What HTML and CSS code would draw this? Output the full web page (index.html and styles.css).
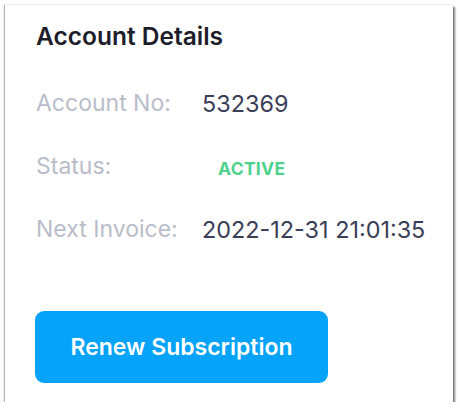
FILE: index.html
```html
<!DOCTYPE html>
<html>
<head>
<meta charset="utf-8">
<link rel="stylesheet" href="styles.css">
</head>
<body>
<div class="card">
  <h2 class="title">Account Details</h2>
  <div class="rows">
    <div class="row"><span class="label">Account No:</span><span class="value">532369</span></div>
    <div class="row"><span class="label">Status:</span><span class="value"><span class="badge">ACTIVE</span></span></div>
    <div class="row"><span class="label">Next Invoice:</span><span class="value">2022-12-31 21:01:35</span></div>
  </div>
  <button class="btn">Renew Subscription</button>
</div>
</body>
</html>
```
FILE: styles.css
```css
html, body {
  margin: 0;
  background: #fff;
}
body {
  padding: 5px 0 0 4px;
  font-family: Inter, "Noto Sans", sans-serif;
}
.card {
  width: 449px;
  height: 397px;
  box-sizing: border-box;
  background: #fff;
  padding: 16px 0 0 31px;
  box-shadow: 0 0 2px rgba(0,0,0,0.2), 2px 2px 2px rgba(0,0,0,0.5);
  border-left: 1px solid #b5b5b5;
}
.title {
  margin: 0;
  font-size: 24.5px;
  font-weight: 600;
  color: #1e1d2b;
  line-height: 30px;
}
.rows {
  margin-top: 37px;
  display: flex;
  flex-direction: column;
  gap: 33px;
}
.row {
  display: flex;
  align-items: center;
  height: 30px;
  font-size: 23px;
}
.label {
  width: 166px;
  color: #b9bdc9;
}
.value {
  color: #3b3e57;
  font-size: 23.4px;
}
.badge {
  display: inline-block;
  padding: 0 16px;
  font-size: 17.5px;
  font-weight: 700;
  color: #4fd18e;
  letter-spacing: 0.3px;
}
.btn {
  margin-top: 67px;
  margin-left: -1px;
  width: 293px;
  height: 72px;
  border: none;
  border-radius: 9px;
  background: #07a3f9;
  color: #fff;
  font-family: Inter, "Noto Sans", sans-serif;
  font-size: 23px;
  font-weight: 600;
}
```
